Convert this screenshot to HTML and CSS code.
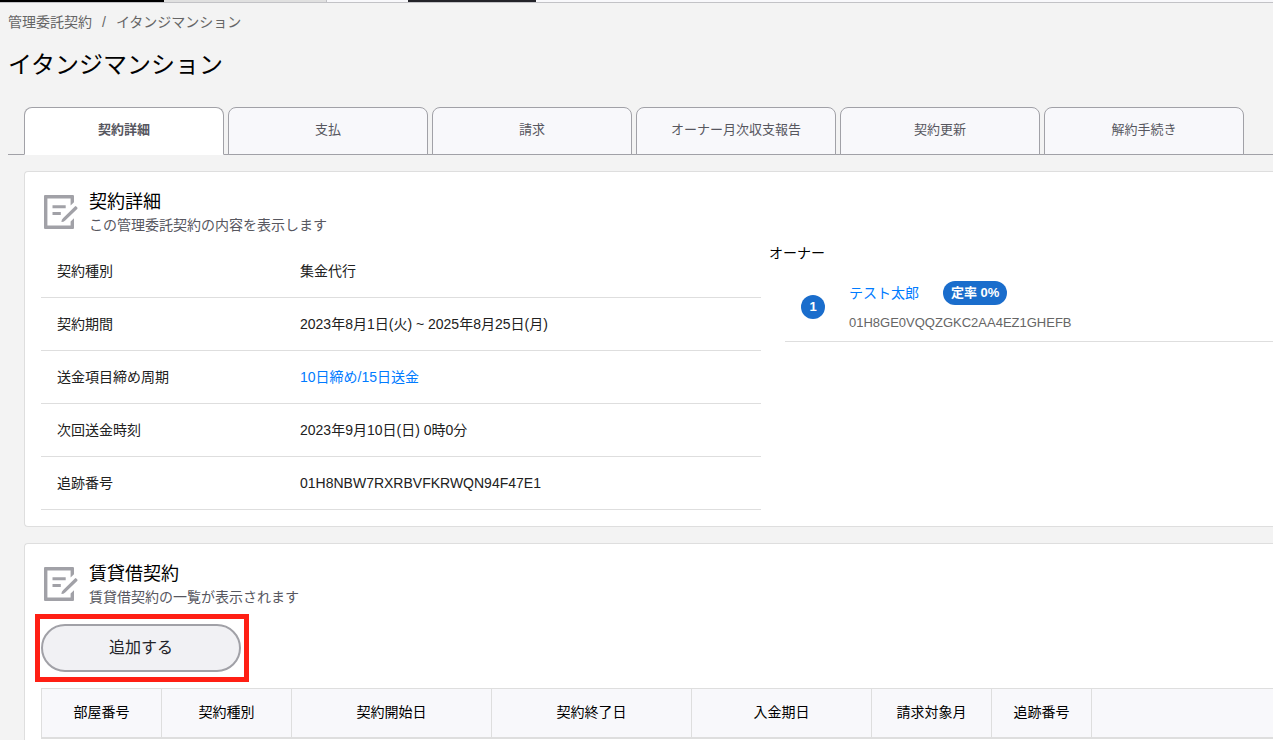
FILE: index.html
```html
<!DOCTYPE html>
<html lang="ja">
<head>
<meta charset="utf-8">
<meta name="viewport" content="width=device-width, initial-scale=1">
<title>イタンジマンション</title>
<link rel="stylesheet" href="styles.css">
</head>
<body>
<svg class="sprite" aria-hidden="true">
  <symbol id="icon-note" viewBox="0 0 36 36">
    <path d="M2.6 1H29.9Q31 1 31 2.1V8.2L27.6 11.6V4.4H4.4V31.6H27.6V27.6L31 24.2V33.9Q31 35 29.9 35H2.1Q1 35 1 33.9V2.1Q1 1 2.1 1Z"/>
    <path d="M9.5 11.3H22.7V14.3H9.5ZM9.5 18H17.8V21H9.5Z"/>
    <path d="M31.9 12.4Q32.6 11.8 33.3 12.5L34.3 13.5Q34.9 14.2 34.2 14.9L22.2 26.4Q20.6 28 18.4 28Q18.4 25.8 20.2 24.1Z"/>
  </symbol>
</svg>
<div class="topbar"><span class="topbar-brand"></span><span class="topbar-group"></span><span class="topbar-current"></span></div>
<main class="page">
  <nav class="breadcrumb" aria-label="パンくず">
    <a href="#">管理委託契約</a><span>/</span><span>イタンジマンション</span>
  </nav>
  <h1 class="page-title">イタンジマンション</h1>
  <nav class="tabs">
    <a class="tab tab-active" href="#">契約詳細</a>
    <a class="tab" href="#">支払</a>
    <a class="tab" href="#">請求</a>
    <a class="tab" href="#">オーナー月次収支報告</a>
    <a class="tab" href="#">契約更新</a>
    <a class="tab" href="#">解約手続き</a>
  </nav>
  <div class="cards">
    <section class="card">
      <header class="card-header">
        <svg class="card-icon" aria-hidden="true"><use href="#icon-note"/></svg>
        <div>
          <h2 class="card-title">契約詳細</h2>
          <p class="card-subtitle">この管理委託契約の内容を表示します</p>
        </div>
      </header>
      <div class="details">
        <table class="detail-table">
          <tr><th scope="row">契約種別</th><td>集金代行</td></tr>
          <tr><th scope="row">契約期間</th><td>2023年8月1日(火) ~ 2025年8月25日(月)</td></tr>
          <tr><th scope="row">送金項目締め周期</th><td><a class="link" href="#">10日締め/15日送金</a></td></tr>
          <tr><th scope="row">次回送金時刻</th><td>2023年9月10日(日) 0時0分</td></tr>
          <tr><th scope="row">追跡番号</th><td>01H8NBW7RXRBVFKRWQN94F47E1</td></tr>
        </table>
        <div class="owners">
          <h3 class="owners-title">オーナー</h3>
          <div class="owner">
            <span class="owner-number">1</span>
            <div>
              <div class="owner-line"><a class="link" href="#">テスト太郎</a><span class="tag">定率 0%</span></div>
              <div class="owner-id">01H8GE0VQQZGKC2AA4EZ1GHEFB</div>
            </div>
          </div>
        </div>
      </div>
    </section>
    <section class="card card-last">
      <header class="card-header">
        <svg class="card-icon" aria-hidden="true"><use href="#icon-note"/></svg>
        <div>
          <h2 class="card-title">賃貸借契約</h2>
          <p class="card-subtitle">賃貸借契約の一覧が表示されます</p>
        </div>
      </header>
      <div class="highlight"><button class="add-button" type="button">追加する</button></div>
      <table class="lease-table">
        <colgroup>
          <col class="col-120"><col class="col-130"><col class="col-200"><col class="col-200"><col class="col-180"><col class="col-120"><col class="col-100"><col>
        </colgroup>
        <thead>
          <tr><th>部屋番号</th><th>契約種別</th><th>契約開始日</th><th>契約終了日</th><th>入金期日</th><th>請求対象月</th><th>追跡番号</th><th></th></tr>
        </thead>
      </table>
    </section>
  </div>
</main>
</body>
</html>
```

FILE: styles.css
```css
* {
  box-sizing: border-box;
}

body {
  margin: 0;
  min-height: 100vh;
  display: flex;
  flex-direction: column;
  background: #f3f3f3;
  color: #212121;
  font-family: "Liberation Sans", "Noto Sans CJK JP", sans-serif;
  font-size: 14px;
  line-height: 20px;
}

h1, h2, h3, p {
  margin: 0;
  font-weight: 400;
}

a {
  color: inherit;
  text-decoration: none;
}

.sprite {
  display: none;
}

.topbar {
  display: flex;
  height: 3px;
  background: #f8f8fb;
  border-bottom: 1px solid #c2c2c6;
}

.topbar-brand {
  width: 164px;
  background: #000;
}

.topbar-group {
  width: 163px;
  background: #e0e0e0;
  border-right: 1px solid #c2c2c6;
}

.topbar-current {
  width: 128px;
  margin-left: 81px;
  background: #232329;
}

.page {
  flex: 1;
  display: flex;
  flex-direction: column;
  padding: 9px 0 0 8px;
}

.breadcrumb {
  display: flex;
  gap: 10px;
  color: #666;
}

.page-title {
  margin-top: 15px;
  color: #000;
  font-size: 24px;
  line-height: 36px;
}

.tabs {
  display: flex;
  gap: 4px;
  margin-top: 24px;
  padding-left: 16px;
  border-bottom: 1px solid #a1a1a7;
}

.tab {
  width: 200px;
  height: 48px;
  margin-bottom: -1px;
  border: 1px solid #a1a1a7;
  border-radius: 8px 8px 0 0;
  background: #f8f8fb;
  color: #57575f;
  font-size: 13px;
  line-height: 44px;
  text-align: center;
}

.tab-active {
  border-bottom-color: #fff;
  background: #fff;
  font-weight: 700;
}

.cards {
  flex: 1;
  display: flex;
  flex-direction: column;
  gap: 16px;
  padding: 16px 0 0 16px;
}

.card {
  padding: 17px 0 16px 16px;
  border: 1px solid #dedede;
  border-right: 0;
  border-radius: 4px 0 0 4px;
  background: #fff;
}

.card-last {
  flex: 1;
  padding-bottom: 0;
  border-bottom: 0;
  border-bottom-left-radius: 0;
}

.card-header {
  display: flex;
  align-items: center;
  gap: 10px;
  padding-left: 2px;
}

.card-icon {
  width: 36px;
  height: 36px;
  fill: #a1a1a7;
}

.card-title {
  color: #000;
  font-size: 18px;
  line-height: 26px;
}

.card-subtitle {
  color: #57575f;
  line-height: 20px;
}

.details {
  display: grid;
  grid-template-columns: minmax(0, 720px) minmax(0, 1fr);
  column-gap: 8px;
  padding-top: 10px;
}

.detail-table {
  width: 100%;
  border-collapse: separate;
  border-spacing: 0;
}

.detail-table th,
.detail-table td {
  height: 53px;
  padding: 0 16px;
  border-bottom: 1px solid #dedede;
  font-weight: 400;
  text-align: left;
}

.detail-table th {
  width: 243px;
}

.link {
  color: #007bff;
}

.owners-title {
  color: #000;
  font-size: 14px;
  line-height: 16px;
}

.owner {
  display: flex;
  align-items: center;
  gap: 24px;
  margin: 12px 0 0 16px;
  padding: 8px 0 8px 16px;
  border-bottom: 1px solid #dedede;
}

.owner-number {
  width: 24px;
  height: 24px;
  border-radius: 12px;
  background: #1a6dcc;
  color: #fff;
  font-size: 13px;
  font-weight: 700;
  line-height: 24px;
  text-align: center;
}

.owner-line {
  display: flex;
  align-items: center;
  gap: 24px;
}

.tag {
  padding: 0 8px;
  border-radius: 12px;
  background: #1a6dcc;
  color: #fff;
  font-size: 13px;
  font-weight: 700;
  line-height: 24px;
}

.owner-id {
  margin-top: 8px;
  color: #666;
  font-size: 13px;
  line-height: 20px;
}

.highlight {
  position: relative;
  width: 200px;
  margin-top: 17px;
}

.highlight::after {
  content: "";
  position: absolute;
  inset: -10px -8px -10px -6px;
  border: 5px solid #ff1f14;
  pointer-events: none;
}

.add-button {
  display: block;
  width: 100%;
  height: 48px;
  border: 2px solid #a1a1a7;
  border-radius: 24px;
  background: #f1f1f4;
  color: #232329;
  font: inherit;
  font-size: 16px;
}

.lease-table {
  width: 100%;
  margin-top: 16px;
  table-layout: fixed;
  border-collapse: separate;
  border-spacing: 0;
}

.lease-table th {
  height: 51px;
  padding: 0 0 2px;
  border: solid #dedede;
  border-width: 1px 0 2px 1px;
  background: #f8f8fb;
  color: #000;
  font-weight: 400;
}

.col-100 { width: 100px; }
.col-120 { width: 120px; }
.col-130 { width: 130px; }
.col-180 { width: 180px; }
.col-200 { width: 200px; }
```
